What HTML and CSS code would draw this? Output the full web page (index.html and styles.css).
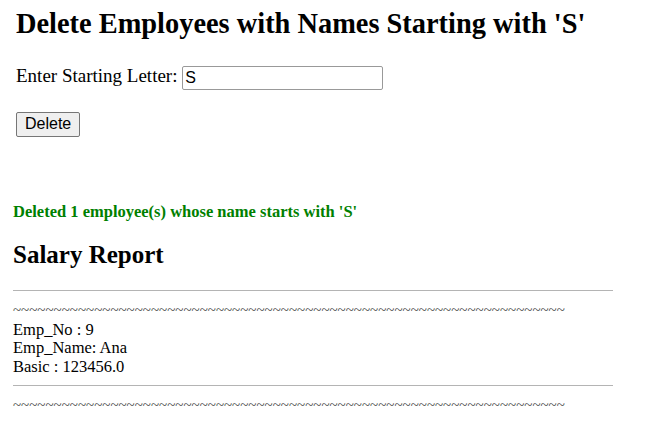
FILE: index.html
```html
<!DOCTYPE html>
<html>
<head>
<meta charset="utf-8">
<link rel="stylesheet" href="styles.css">
</head>
<body>
<div class="form-area">
  <h1 class="title">Delete Employees with Names Starting with 'S'</h1>
  <form class="form">
    <p class="row"><label>Enter Starting Letter: <input type="text" class="letter" value="S"></label></p>
    <p class="row row-btn"><button type="button" class="btn">Delete</button></p>
  </form>
</div>
<div class="result">
  <p class="msg">Deleted 1 employee(s) whose name starts with 'S'</p>
  <h2 class="report">Salary Report</h2>
  <hr class="rule">
  <div class="tilde">~~~~~~~~~~~~~~~~~~~~~~~~~~~~~~~~~~~~~~~~~~~~~~~~~~~~~~~~~~~~~~~~~~~~</div>
  <div class="rec">Emp_No : 9<br>Emp_Name: Ana<br>Basic : 123456.0</div>
  <hr class="rule rule-end">
  <div class="tilde">~~~~~~~~~~~~~~~~~~~~~~~~~~~~~~~~~~~~~~~~~~~~~~~~~~~~~~~~~~~~~~~~~~~~</div>
</div>
</body>
</html>
```

FILE: styles.css
```css
html, body { background: #fff; }
body {
  margin: 0;
  font-family: "Liberation Serif", "Times New Roman", serif;
  font-size: 16px;
  color: #000;
}
.form-area { padding: 0 16px; }
.title {
  font-size: 28.4px;
  font-weight: bold;
  margin: 7px 0 0;
  line-height: 34px;
}
.form { margin-top: 22px; }
.row { margin: 0 0 22px; font-size: 19px; line-height: 26px; }
.row-btn { margin: 0; line-height: 25px; }
.letter {
  width: 195px;
  height: 22px;
  box-sizing: content-box;
  padding: 0 2px;
  margin: 0;
  font-family: "Liberation Sans", Arial, sans-serif;
  font-size: 16px;
  border: 1px solid #999;
  border-radius: 2px;
  vertical-align: middle;
}
.btn {
  font-family: "Liberation Sans", Arial, sans-serif;
  font-size: 16px;
  padding: 0 8px;
  margin: 0;
  background: #efefef;
  border: 1px solid #767676;
  border-radius: 2px;
  height: 25px;
  width: 64px;
  vertical-align: top;
}
.result { padding: 0 13px; }
.msg {
  color: #008000;
  font-weight: bold;
  font-size: 16.5px;
  line-height: 19px;
  margin: 65px 0 0;
}
.report {
  font-size: 25px;
  line-height: 30px;
  margin: 19px 0 0;
}
.rule {
  width: 600px;
  height: 0;
  margin: 20px 0 0;
  border: 0;
  border-top: 1px solid #b4b4b4;
}
.rule-end { margin-top: 9px; }
.tilde {
  font-size: 15px;
  white-space: nowrap;
  padding-top: 8px;
  line-height: 22px;
  color: #444;
}
.rec { font-size: 16.5px; line-height: 18.5px; }
```
